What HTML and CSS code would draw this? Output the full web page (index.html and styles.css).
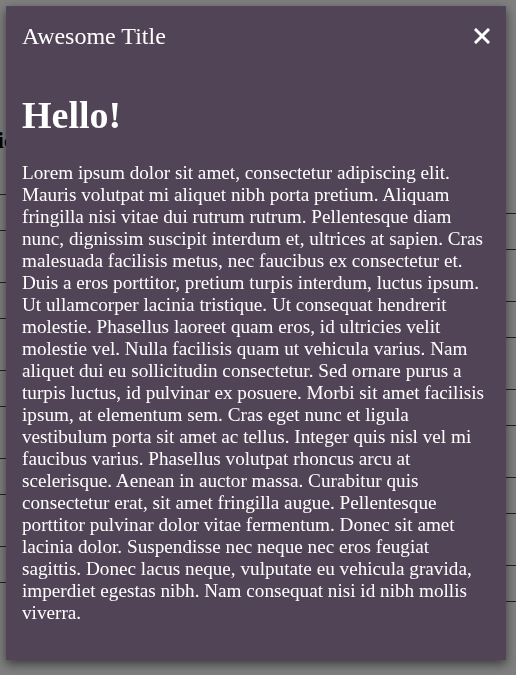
FILE: index.html
```html
<!DOCTYPE html>
<html lang="en">
<head>
<meta charset="utf-8">
<title>Modal</title>
<link rel="stylesheet" href="styles.css">
</head>
<body>
<div class="page">
  <h2 class="page-title">Basic</h2>
  <div class="rows">
    <div class="col col-left">
      <div class="row"></div><div class="row"></div><div class="row"></div><div class="row"></div><div class="row"></div>
    </div>
    <div class="col col-right">
      <div class="row"></div><div class="row"></div><div class="row"></div><div class="row"></div><div class="row"></div>
    </div>
  </div>
</div>
<div class="overlay">
  <div class="modal" role="dialog">
    <div class="modal-header">
      <span class="modal-title">Awesome Title</span>
      <button class="close" aria-label="Close">
        <svg width="16" height="16" viewBox="0 0 16 16"><path d="M2 2 L14 14 M14 2 L2 14" stroke="#fff" stroke-width="3" stroke-linecap="square" fill="none"/></svg>
      </button>
    </div>
    <div class="modal-body">
      <h1 class="hello">Hello!</h1>
      <p class="text">Lorem ipsum dolor sit amet, consectetur adipiscing elit. Mauris volutpat mi aliquet nibh porta pretium. Aliquam fringilla nisi vitae dui rutrum rutrum. Pellentesque diam nunc, dignissim suscipit interdum et, ultrices at sapien. Cras malesuada facilisis metus, nec faucibus ex consectetur et. Duis a eros porttitor, pretium turpis interdum, luctus ipsum. Ut ullamcorper lacinia tristique. Ut consequat hendrerit molestie. Phasellus laoreet quam eros, id ultricies velit molestie vel. Nulla facilisis quam ut vehicula varius. Nam aliquet dui eu sollicitudin consectetur. Sed ornare purus a turpis luctus, id pulvinar ex posuere. Morbi sit amet facilisis ipsum, at elementum sem. Cras eget nunc et ligula vestibulum porta sit amet ac tellus. Integer quis nisl vel mi faucibus varius. Phasellus volutpat rhoncus arcu at scelerisque. Aenean in auctor massa. Curabitur quis consectetur erat, sit amet fringilla augue. Pellentesque porttitor pulvinar dolor vitae fermentum. Donec sit amet lacinia dolor. Suspendisse nec neque nec eros feugiat sagittis. Donec lacus neque, vulputate eu vehicula gravida, imperdiet egestas nibh. Nam consequat nisi id nibh mollis viverra.</p>
    </div>
  </div>
</div>
</body>
</html>
```
FILE: styles.css
```css
html, body {
  margin: 0;
  padding: 0;
  height: 100%;
  overflow: hidden;
  background: #fff;
  font-family: "Liberation Serif", "Times New Roman", serif;
}

.page-title {
  margin: 126px 0 0 -40px;
  font-size: 24px;
  line-height: 28px;
  font-weight: bold;
  color: #000;
}

.rows {
  display: flex;
  justify-content: space-between;
  margin-top: 40px;
}

.col {
  display: flex;
  flex-direction: column;
  gap: 51px;
  width: 50%;
}

.col-right {
  padding-top: 19px;
}

.row {
  height: 35px;
  border-top: 1px solid #444;
  border-bottom: 1px solid #444;
}

.overlay {
  position: fixed;
  inset: 0;
  background: rgba(0, 0, 0, 0.5);
  padding: 6px;
}

.modal {
  width: 500px;
  box-sizing: border-box;
  background: #524457;
  color: #fff;
  box-shadow: 0 4px 10px rgba(0, 0, 0, 0.55);
}

.modal-header {
  display: flex;
  align-items: center;
  justify-content: space-between;
  padding: 16px 16px 0 16px;
}

.modal-title {
  font-size: 24px;
  line-height: 28px;
}

.close {
  background: none;
  border: 0;
  padding: 0;
  width: 16px;
  height: 16px;
  display: flex;
  cursor: pointer;
}

.modal-body {
  padding: 0 16px 16px 16px;
}

.hello {
  font-size: 38px;
  line-height: 44px;
  font-weight: bold;
  margin: 43px 0 25px;
}

.text {
  font-size: 19.2px;
  line-height: 22px;
  margin: 0 0 20px;
}
```
